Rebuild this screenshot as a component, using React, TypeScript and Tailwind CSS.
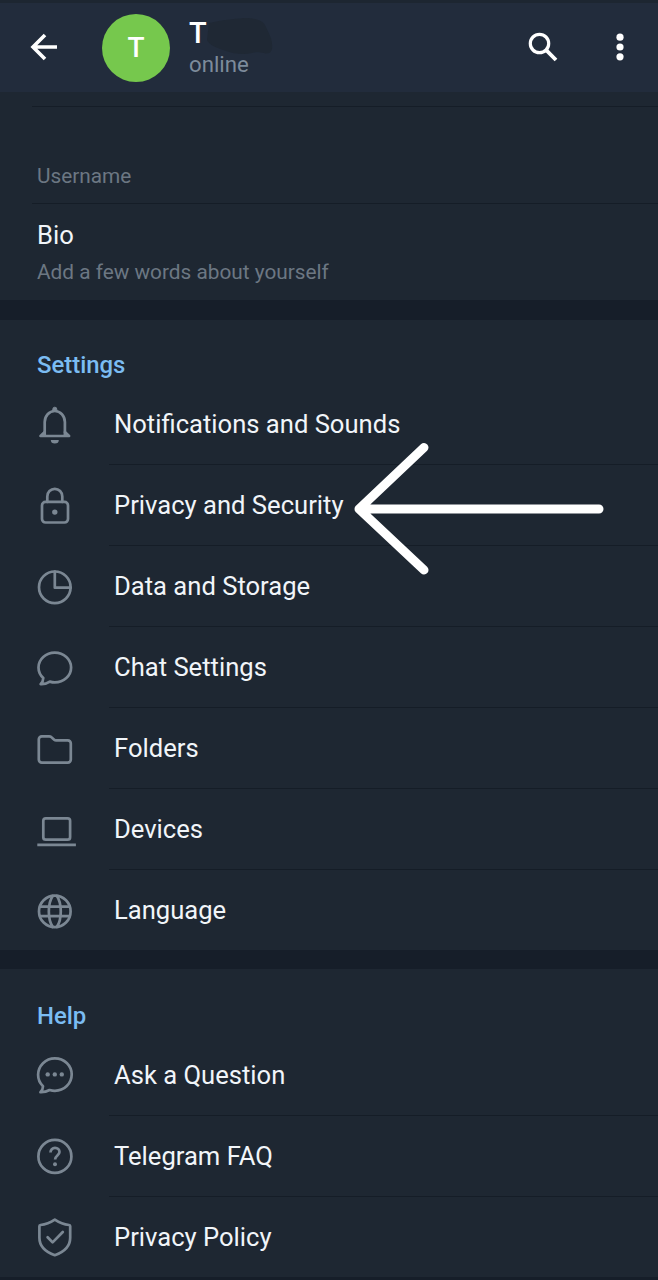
import type { ReactNode } from 'react'

interface MenuItem {
  label: string
  icon: ReactNode
}

const settingsItems: MenuItem[] = [
  {
    label: 'Notifications and Sounds',
    icon: (
      <>
        <path d="M10.7 33V20a10.1 11 0 0 1 20.2 0v13" />
        <path d="M6.5 33.9l4.2-3.8M35.1 33.9l-4.2-3.8M6.5 34h28.6" />
        <path d="M18.8 8.5V7.2a2 2 0 0 1 4 0v1.3z" fill="currentColor" strokeWidth={1} />
        <path d="M16.8 38h8a4 3.6 0 0 1-8 0z" fill="currentColor" stroke="none" />
      </>
    ),
  },
  {
    label: 'Privacy and Security',
    icon: (
      <>
        <rect x={8} y={18.9} width={26} height={20.6} rx={3.5} />
        <path d="M13.3 18.9v-5.4a7.5 7.7 0 0 1 15 0v5.4" />
        <circle cx={20.8} cy={29.1} r={2.7} fill="currentColor" stroke="none" />
      </>
    ),
  },
  {
    label: 'Data and Storage',
    icon: (
      <>
        <circle cx={20.8} cy={23.3} r={15.8} />
        <path d="M20.8 7.5v16.2h15.8" />
      </>
    ),
  },
  {
    label: 'Chat Settings',
    icon: <path d="M9.3 33.1C6.3 30.3 4.5 26.5 4.5 22.5 4.5 14.3 11.8 7.7 20.8 7.7S37.1 14.3 37.1 22.5 29.8 37.4 20.8 37.4c-1.8 0-3.4-.3-5-.8-2.6 1.8-5.6 2.7-9.2 2.5 1.8-1.8 2.7-3.6 2.7-6z" />,
  },
  {
    label: 'Folders',
    icon: <path d="M4.8 14.3v-1a3 3 0 0 1 3-3h7.4a3 3 0 0 1 2 .8l3 2.6a3 3 0 0 0 2 .7h11.6a3 3 0 0 1 3 3v16.2a3 3 0 0 1-3 3h-26a3 3 0 0 1-3-3z" />,
  },
  {
    label: 'Devices',
    icon: (
      <>
        <rect x={9.3} y={11.3} width={26.8} height={21.4} rx={2.5} />
        <path d="M3.3 37.8h38.6" strokeWidth={2.8} strokeLinecap="butt" />
      </>
    ),
  },
  {
    label: 'Language',
    icon: (
      <>
        <circle cx={20.8} cy={23.4} r={15.8} />
        <path d="M18.8 7.8c-5.3 7.8-5.3 23.4 0 31.2M22.8 7.8c5.3 7.8 5.3 23.4 0 31.2M6 18.6h29.6M6 28.2h29.6" />
      </>
    ),
  },
]

const helpItems: MenuItem[] = [
  {
    label: 'Ask a Question',
    icon: (
      <>
        <path d="M9 33.2C6 30.4 4.1 26.2 4.1 21.8 4.1 12.8 11.6 5.3 20.9 5.3s16.8 7.2 16.8 16.2S30.2 37.8 20.9 37.8c-1.9 0-3.6-.3-5.3-.8-2.7 1.6-5.9 2.3-9.2 2.2C8.2 37.5 9 35.5 9 33.2z" />
        <g fill="currentColor" stroke="none">
          <circle cx={13.7} cy={21.4} r={2.2} />
          <circle cx={20.8} cy={21.4} r={2.2} />
          <circle cx={27.8} cy={21.4} r={2.2} />
        </g>
      </>
    ),
  },
  {
    label: 'Telegram FAQ',
    icon: (
      <>
        <circle cx={20.9} cy={22.4} r={16.5} />
        <path d="M16.5 18.5c0-2.7 1.9-4.6 4.5-4.6s4.5 1.8 4.5 4.2c0 3.3-4.4 3.7-4.4 7.4" strokeLinecap="butt" />
        <circle cx={21} cy={30.2} r={2} fill="currentColor" stroke="none" />
      </>
    ),
  },
  {
    label: 'Privacy Policy',
    icon: (
      <>
        <path d="M20.8 4.7c4.5 3 9.3 4.8 14.3 5.3.7.1 1.1.6 1.1 1.2v11.5c0 8.5-6.4 14.3-15.4 17.5C11.8 37 5.4 31.2 5.4 22.7V11.2c0-.6.4-1.1 1.1-1.2 5-.5 9.8-2.3 14.3-5.3z" />
        <path d="M13.6 22.2l5 5.2L28.8 17" />
      </>
    ),
  },
]

interface MenuSectionProps {
  title: string
  items: MenuItem[]
  className?: string
}

function MenuSection({ title, items, className = '' }: MenuSectionProps) {
  return (
    <section className={className}>
      <h2 className="h-16 pt-[29px] pl-[37px] text-[23.9px] leading-8 font-medium text-[#7bbcf2]">{title}</h2>
      {items.map((item, index) => (
        <div key={item.label} className="flex h-[81px] items-center pl-[34px]">
          <svg
            viewBox="0 0 44 44"
            className="mb-px size-11 shrink-0 text-[#7b8793]"
            fill="none"
            stroke="currentColor"
            strokeWidth={2.7}
            strokeLinecap="round"
            strokeLinejoin="round"
          >
            {item.icon}
          </svg>
          <div
            className={`ml-[31px] flex h-full flex-1 items-center border-b pt-px pl-[5px] text-[25.6px] text-[#f1f5f9] ${
              index < items.length - 1 ? 'border-[#151d27]' : 'border-transparent'
            }`}
          >
            {item.label}
          </div>
        </div>
      ))}
    </section>
  )
}

export default function App() {
  return (
    <div className="relative h-[1280px] w-[658px] overflow-hidden bg-[#1e2732] font-['Roboto',sans-serif]">
      {/* Header */}
      <header className="flex h-[92px] items-center border-t-[3px] border-[#1d2631] bg-[#222c3c] pl-[30px] text-white">
        <svg viewBox="0 0 28 28" className="mb-px size-7" fill="none" stroke="currentColor" strokeWidth={3.6}>
          <path d="M27 14H4M15 2L3 14l12 12" />
        </svg>
        <div className="ml-[44px] flex size-[68px] items-center justify-center rounded-full bg-[#76c84d] text-[28px] font-medium">
          T
        </div>
        <div className="ml-[19px] flex-1">
          <div className="flex h-[33px] items-center pt-px text-[29px] font-medium">
            <span>T</span>
            <svg viewBox="0 0 70 38" className="-ml-1 h-[38px] w-[70px] shrink-0 translate-y-[3px]">
              <path d="M6 5C20 2 30 1 41 0c11 0 18 2 21 7 3 7 7 13 7 19 1 7-2 11-8 9-5-1-8-1-12 0-8 2-18 1-26-2C14 30 6 27 4 22z" fill="#1f2834" />
            </svg>
          </div>
          <div className="h-7 text-[22.2px] leading-7 text-[#7d8b9b]">online</div>
        </div>
        <svg viewBox="0 0 30 30" className="mb-px size-[30px]" fill="none" stroke="currentColor" strokeWidth={3.2}>
          <circle cx={11.5} cy={11.5} r={9.2} />
          <path d="M18.2 18.2l9.8 9.8" strokeWidth={3.8} />
        </svg>
        <svg viewBox="0 0 8 28" className="mr-[34px] mb-px ml-[58px] h-7 w-2" fill="currentColor">
          <circle cx={4} cy={4.2} r={3.6} />
          <circle cx={4} cy={14} r={3.6} />
          <circle cx={4} cy={23.8} r={3.6} />
        </svg>
      </header>

      {/* Profile */}
      <section className="h-[208px] text-[#6c7783]">
        <div className="ml-8 h-[15px] border-b border-[#151d27]" />
        <div className="ml-8 h-[97px] border-b border-[#151d27] pt-[53px] pl-[5px] text-[20.8px] leading-8">Username</div>
        <div className="pt-[15px] pl-[37px]">
          <div className="text-[25.6px] leading-8 text-[#f1f5f9]">Bio</div>
          <div className="mt-[5px] text-[20.8px] leading-8">Add a few words about yourself</div>
        </div>
      </section>

      <div className="h-5 bg-[#161e29]" />
      <MenuSection title="Settings" items={settingsItems} />
      <div className="-mt-px h-[19px] bg-[#161e29]" />
      <MenuSection title="Help" items={helpItems} className="pt-0.5" />
      <div className="-mt-px h-4 bg-[#161e29]" />

      {/* Pointer to the privacy row */}
      <svg
        viewBox="0 0 250 134"
        className="absolute top-[442px] left-[354px] h-[134px] w-[250px] text-white"
        fill="none"
        stroke="currentColor"
        strokeWidth={9}
        strokeLinecap="round"
        strokeLinejoin="round"
      >
        <path d="M245 67H5M70 5.5L5 67l65 61" />
      </svg>
    </div>
  )
}
